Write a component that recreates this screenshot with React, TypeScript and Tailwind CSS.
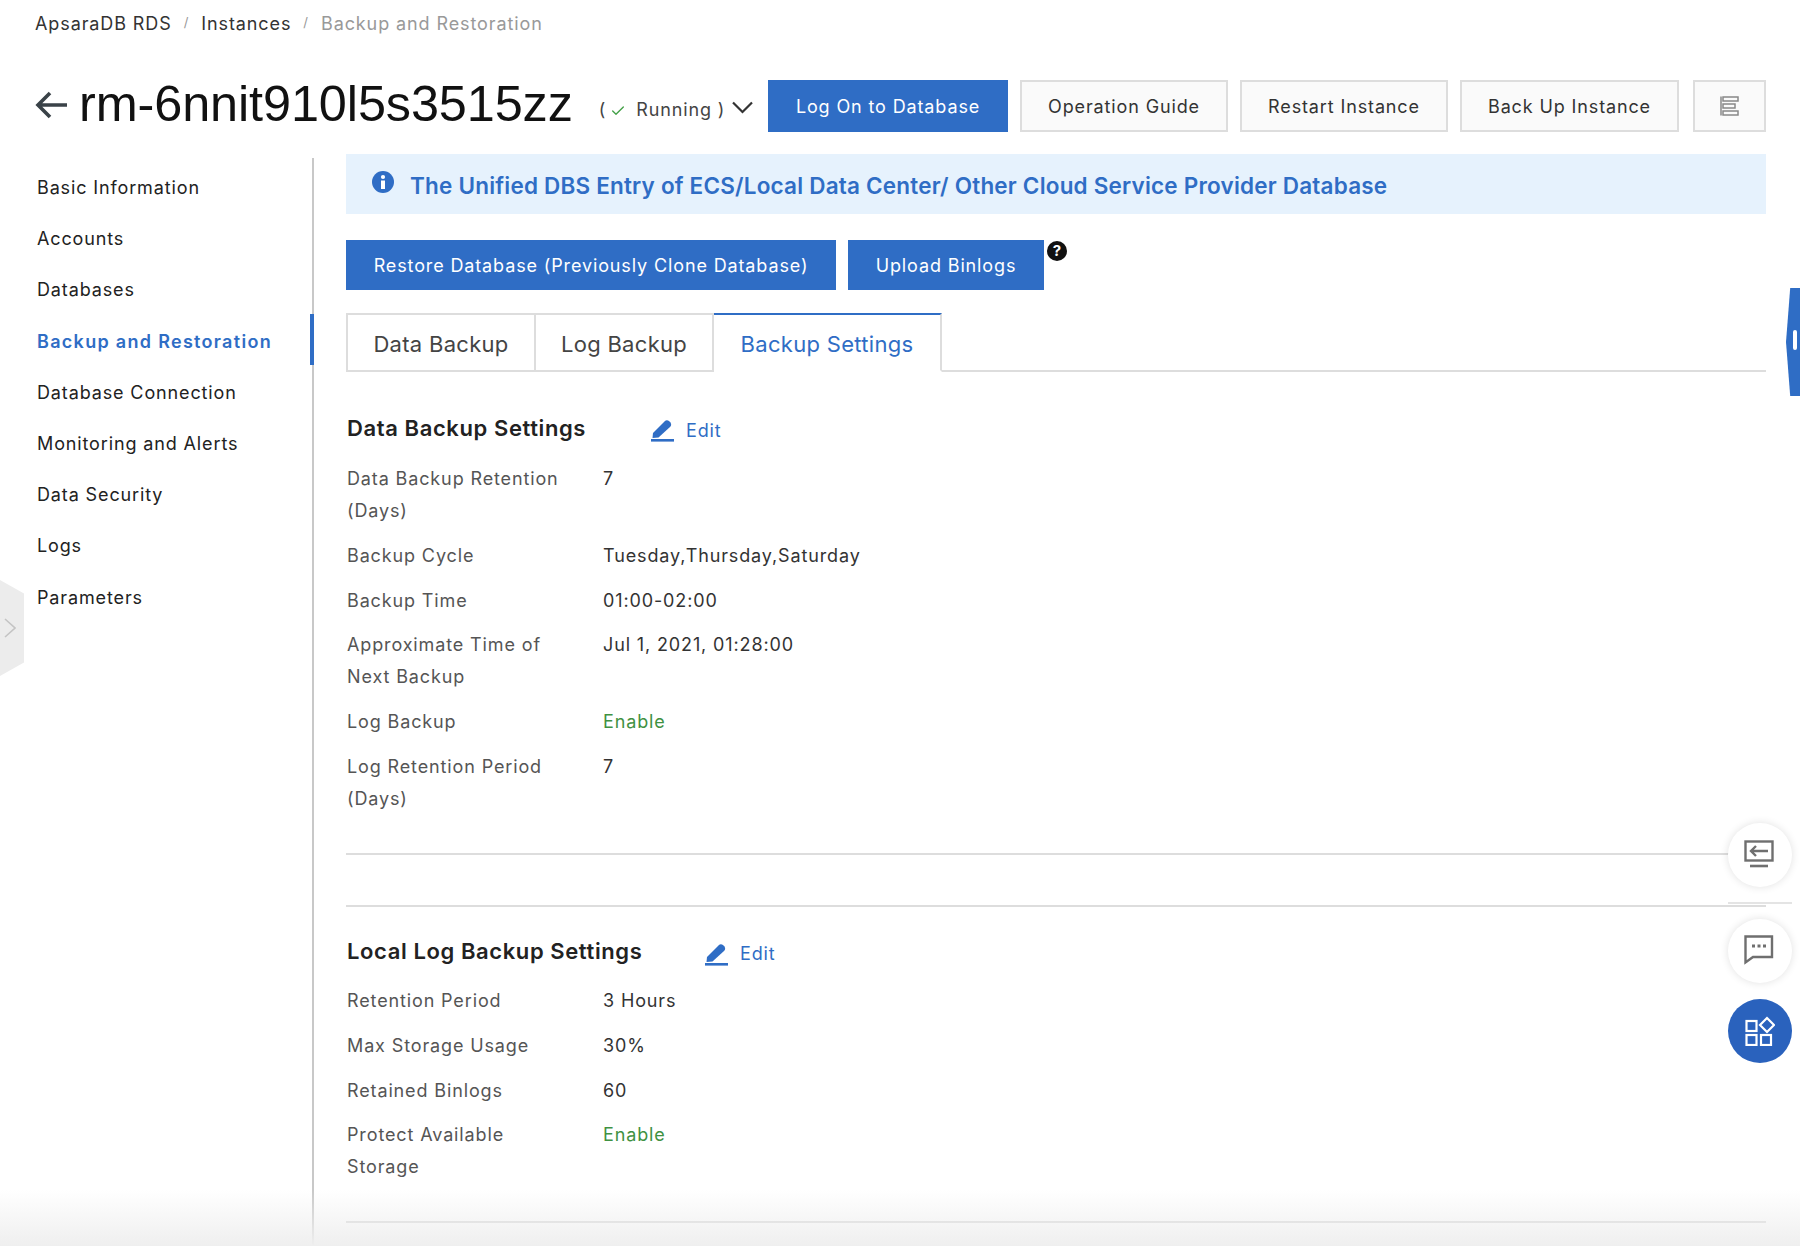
import React from 'react';
import { Check } from 'lucide-react';

const menuItems = [
  { label: 'Basic Information' },
  { label: 'Accounts' },
  { label: 'Databases' },
  { label: 'Backup and Restoration', active: true },
  { label: 'Database Connection' },
  { label: 'Monitoring and Alerts' },
  { label: 'Data Security' },
  { label: 'Logs' },
  { label: 'Parameters' },
];

const dataBackupRows = [
  { label: 'Data Backup Retention (Days)', value: '7' },
  { label: 'Backup Cycle', value: 'Tuesday,Thursday,Saturday' },
  { label: 'Backup Time', value: '01:00-02:00' },
  { label: 'Approximate Time of Next Backup', value: 'Jul 1, 2021, 01:28:00' },
  { label: 'Log Backup', value: 'Enable', green: true },
  { label: 'Log Retention Period (Days)', value: '7' },
];

const logBackupRows = [
  { label: 'Retention Period', value: '3 Hours' },
  { label: 'Max Storage Usage', value: '30%' },
  { label: 'Retained Binlogs', value: '60' },
  { label: 'Protect Available Storage', value: 'Enable', green: true },
];

const EditLink = () => (
  <button className="flex items-center gap-3 mt-[2px] text-[#2f6dc5] text-[18px] tracking-[0.87px]">
    <svg width="24" height="24" viewBox="0 0 24 24" fill="#2f6dc5">
      <path d="M3 15 L14.500 3.500 Q16.500 1.500 19 3 L20.500 4.500 Q22 7 20 9 L8.500 19.500 L2.500 20 Z" />
      <rect x="1" y="21" width="23" height="2.6" />
    </svg>
    Edit
  </button>
);

const InfoRows = ({ rows }: { rows: { label: string; value: string; green?: boolean }[] }) => (
  <div className="flex flex-col gap-[12.8px]">
    {rows.map((row) => (
      <div key={row.label} className="flex text-[18px] leading-[32px] tracking-[0.87px]">
        <div className="w-[256px] pr-[28px] text-[#555]">{row.label}</div>
        <div className={row.green ? 'text-[#3f9142]' : 'text-[#333]'}>{row.value}</div>
      </div>
    ))}
  </div>
);

const App = () => {
  return (
    <div className="relative h-[1246px] overflow-hidden bg-white font-['Inter','Liberation_Sans',sans-serif] text-[#333]">
      {/* Breadcrumb */}
      <div className="flex items-center h-[46px] pl-[35px] text-[18px] tracking-[0.9px]">
        <span>ApsaraDB RDS</span>
        <span className="mx-[12px] text-[13px] text-[#999]">/</span>
        <span>Instances</span>
        <span className="mx-[12px] text-[13px] text-[#999]">/</span>
        <span className="text-[#999]">Backup and Restoration</span>
      </div>

      {/* Title row */}
      <div className="flex items-center h-[52px] mt-[34px] pl-[35px] pr-[34px]">
        <svg width="32" height="30" viewBox="0 0 32 30" fill="none" stroke="#3a4248" strokeWidth="3.6" className="mr-[12px] -mt-[2px]">
          <path d="M32 15 H3 M15 3 L3 15 L15 27" />
        </svg>
        <h1 className="text-[50.400px] leading-none tracking-[-0.1px] -mt-[4px] text-[#111] font-['Liberation_Sans',sans-serif]">rm-6nnit910l5s3515zz</h1>
        <div className="flex items-center ml-[26px] mt-[6px] text-[18px] tracking-[0.87px] text-[#444]">
          <span>(</span>
          <Check className="w-[16px] h-[16px] text-[#43a047] mx-[4px] mt-[3px]" strokeWidth={2} />
          <span className="ml-[6px]">Running )</span>
          <svg width="21" height="13" viewBox="0 0 21 13" fill="none" stroke="#333" strokeWidth="2.2" className="ml-[7px] -mt-[3px]">
            <path d="M1 1.500 L10.500 11 L20 1.500" />
          </svg>
        </div>
        <button className="ml-auto h-[52px] w-[240px] bg-[#2f6dc5] text-white text-[18px] tracking-[0.87px]">Log On to Database</button>
        <button className="ml-[12px] h-[52px] w-[208px] bg-[#fafafa] border-2 border-[#ddd] text-[18px] tracking-[0.87px]">Operation Guide</button>
        <button className="ml-[12px] h-[52px] w-[208px] bg-[#fafafa] border-2 border-[#ddd] text-[18px] tracking-[0.87px]">Restart Instance</button>
        <button className="ml-[12px] h-[52px] w-[219px] bg-[#fafafa] border-2 border-[#ddd] text-[18px] tracking-[0.87px]">Back Up Instance</button>
        <button className="ml-[14px] h-[52px] w-[73px] bg-[#fafafa] border-2 border-[#ddd] flex items-center justify-center">
          <svg width="20" height="20" viewBox="0 0 20 20" fill="none" stroke="#888" strokeWidth="1.5">
            <path d="M1 0.5 V19.500" />
            <rect x="3" y="1" width="15" height="4" />
            <rect x="3" y="8" width="12" height="4" />
            <rect x="3" y="15" width="15" height="4" />
          </svg>
        </button>
      </div>

      {/* Body */}
      <div className="flex mt-[22px] pr-[34px]">
        {/* Side menu */}
        <nav className="w-[314px] h-[1088px] mt-[4px] shrink-0 border-r-2 border-[#c8c8c8]">
          <ul className="flex flex-col pt-[4px]">
            {menuItems.map((item) => (
              <li
                key={item.label}
                className={
                  item.active
                    ? 'h-[51.2px] -mt-[2px] mb-[2px] pt-[4px] flex items-center pl-[37px] text-[18px] tracking-[1.3px] font-semibold text-[#2f6dc5] border-r-4 border-[#2f6dc5] -mr-[2px]'
                    : 'h-[51.2px] flex items-center pl-[37px] text-[18px] tracking-[0.87px] text-[#222]'
                }
              >
                {item.label}
              </li>
            ))}
          </ul>
        </nav>

        {/* Content */}
        <main className="ml-[32px] flex-1 min-w-0">
          <div className="h-[60px] flex items-center pl-[26px] pt-[4px] bg-[#e6f2fd] text-[#2f6dc5] text-[22.500px] font-semibold tracking-[0.2px]">
            <svg width="22" height="22" viewBox="0 0 22 22" className="mr-[16px] -mt-[8px]">
              <circle cx="11" cy="11" r="11" fill="#2f6dc5" />
              <rect x="9" y="9.500" width="4" height="8.500" fill="#fff" />
              <circle cx="11" cy="6" r="2.100" fill="#fff" />
            </svg>
            The Unified DBS Entry of ECS/Local Data Center/ Other Cloud Service Provider Database
          </div>

          <div className="relative flex gap-[12px] mt-[26px]">
            <button className="h-[50px] w-[490px] bg-[#2f6dc5] text-white text-[18px] tracking-[0.87px]">Restore Database (Previously Clone Database)</button>
            <button className="h-[50px] w-[196px] bg-[#2f6dc5] text-white text-[18px] tracking-[0.87px]">Upload Binlogs</button>
            <span className="absolute left-[701px] top-[1px] w-[20px] h-[20px] rounded-full bg-[#111] text-white text-[15px] font-bold flex items-center justify-center">?</span>
          </div>

          {/* Tabs */}
          <div className="flex h-[59px] mt-[23px] border-b-2 border-[#ddd] text-[22px] tracking-[0.3px]">
            <div className="w-[190px] h-[59px] pt-[4px] flex items-center justify-center bg-white border-2 border-[#ddd] text-[#444]">Data Backup</div>
            <div className="w-[178px] h-[59px] pt-[4px] flex items-center justify-center bg-white border-y-2 border-r-2 border-[#ddd] text-[#444]">Log Backup</div>
            <div className="w-[228px] h-[59px] pt-[4px] flex items-center justify-center bg-white border-t-2 border-t-[#2f6dc5] border-r-2 border-r-[#ddd] border-b-2 border-b-white text-[#2f6dc5]">Backup Settings</div>
          </div>

          {/* Data backup settings */}
          <div className="flex items-center mt-[41px] h-[32px] pl-[1px]">
            <h2 className="w-[303px] -mt-[2px] text-[22px] font-semibold tracking-[0.6px] text-[#222]">Data Backup Settings</h2>
            <EditLink />
          </div>
          <div className="mt-[18px] pl-[1px]">
            <InfoRows rows={dataBackupRows} />
          </div>
          <div className="mt-[38px] border-t-2 border-[#ddd]" />
          <div className="mt-[50px] border-t-2 border-[#ddd]" />

          {/* Local log backup settings */}
          <div className="flex items-center mt-[30px] h-[32px] pl-[1px]">
            <h2 className="w-[357px] -mt-[2px] text-[22px] font-semibold tracking-[0.6px] text-[#222]">Local Log Backup Settings</h2>
            <EditLink />
          </div>
          <div className="mt-[16px] pl-[1px]">
            <InfoRows rows={logBackupRows} />
          </div>
          <div className="mt-[38px] border-t-2 border-[#d6d6d6]" />
        </main>
      </div>

      {/* Bottom fade */}
      <div className="absolute left-0 right-0 bottom-0 h-[56px] bg-gradient-to-b from-transparent to-[#efefef] pointer-events-none" />

      {/* Left collapse handle */}
      <div className="absolute left-0 top-[580px] w-[24px] h-[96px] bg-[#ececec] [clip-path:polygon(0_0,100%_14%,100%_86%,0_100%)] flex items-center">
        <svg width="12" height="20" viewBox="0 0 12 20" fill="none" stroke="#c4c4c4" strokeWidth="1.6" className="ml-[4px]">
          <path d="M1 1 L11 10 L1 19" />
        </svg>
      </div>

      {/* Right drawer handle */}
      <div className="absolute right-0 top-[288px] w-[14px] h-[108px] bg-[#2f6dc5] [clip-path:polygon(30%_0,100%_0,100%_100%,30%_100%,0_50%)]">
        <div className="absolute left-[7px] top-[42px] w-[4px] h-[20px] rounded-[2px] bg-white" />
      </div>

      {/* Floating actions */}
      <div className="absolute left-[1728px] top-[823px] w-[64px] h-[64px] rounded-full bg-white shadow-[0_0_8px_rgba(0,0,0,0.12)] flex items-center justify-center">
        <svg width="30" height="28" viewBox="0 0 30 28" fill="none" stroke="#6f6f6f" strokeWidth="2.4" className="-ml-[2px] -mt-[2px]">
          <rect x="1.500" y="1.500" width="27" height="19" />
          <path d="M24 11 H7 M12 6 L7 11 L12 16" />
          <path d="M6 26 H24" strokeWidth="2.600" />
        </svg>
      </div>
      <div className="absolute left-[1728px] top-[902px] w-[64px] border-t-2 border-[#e4e4e4]" />
      <div className="absolute left-[1728px] top-[919px] w-[64px] h-[64px] rounded-full bg-white shadow-[0_0_8px_rgba(0,0,0,0.12)] flex items-center justify-center">
        <svg width="30" height="30" viewBox="0 0 30 30" fill="none" stroke="#6f6f6f" strokeWidth="2.4" className="-ml-[2px] -mt-[2px]">
          <path d="M1.500 1.500 H28 V22 H9 L1.500 27.500 Z" />
          <path d="M8 11 h3 M13.500 11 h3 M19 11 h3" strokeWidth="3" />
        </svg>
      </div>
      <div className="absolute left-[1728px] top-[999px] w-[64px] h-[64px] rounded-full bg-[#2a62bd] flex items-center justify-center">
        <svg width="30" height="30" viewBox="0 0 30 30" fill="none" stroke="#fff" strokeWidth="2.2">
          <rect x="1.500" y="5" width="10" height="10" />
          <rect x="1.500" y="19" width="10" height="10" />
          <rect x="16" y="19" width="10" height="10" />
          <path d="M22 2 L29 9 L22 16 L15 9 Z" />
        </svg>
      </div>
    </div>
  );
};

export default App;
